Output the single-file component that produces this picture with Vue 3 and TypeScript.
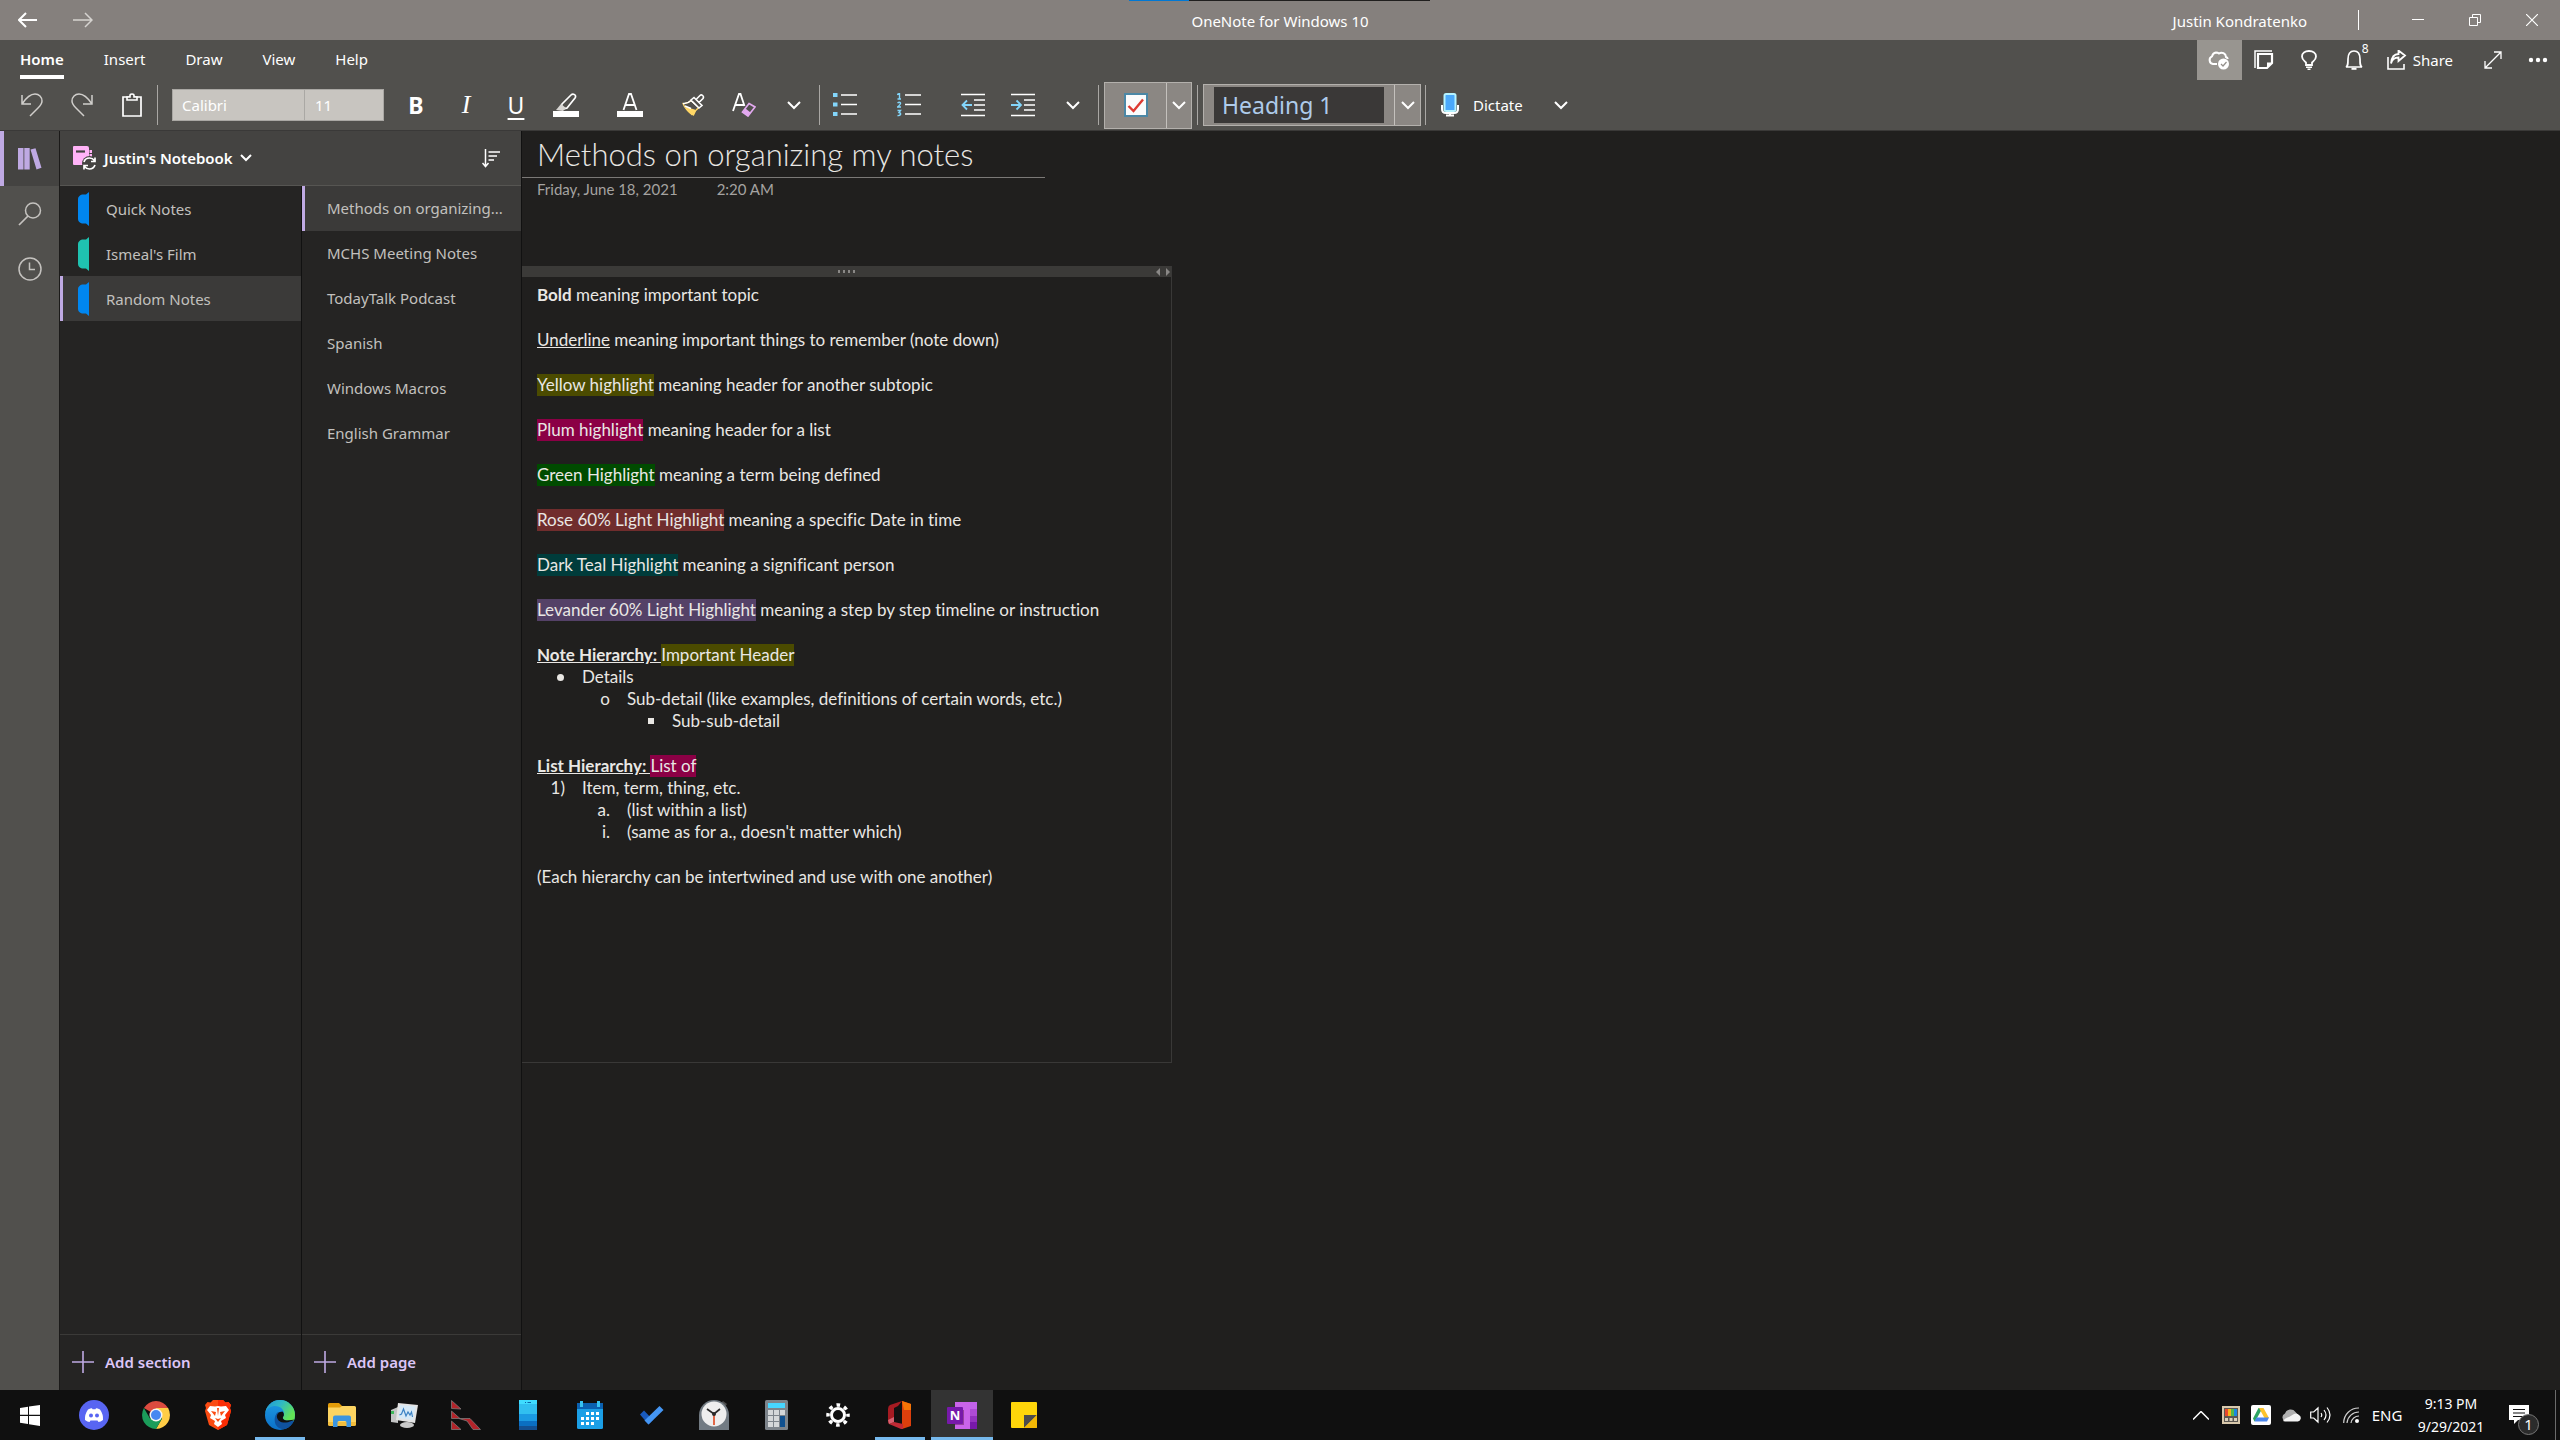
<script setup lang="ts">
import { ref } from 'vue'

interface Section { name: string; color: string }
interface Highlight { label: string; tone: string; rest: string }

const tabs = ['Home', 'Insert', 'Draw', 'View', 'Help']
const activeTab = ref('Home')

const sections: Section[] = [
  { name: 'Quick Notes', color: '#0086f0' },
  { name: "Ismeal's Film", color: '#1fc2b0' },
  { name: 'Random Notes', color: '#0086f0' },
]
const activeSection = ref('Random Notes')

const pages = [
  'Methods on organizing my notes',
  'MCHS Meeting Notes',
  'TodayTalk Podcast',
  'Spanish',
  'Windows Macros',
  'English Grammar',
]
const activePage = ref(pages[0])
const shortTitle = (title: string) => (title.length > 22 ? title.slice(0, 21) + '...' : title)

const highlights: Highlight[] = [
  { label: 'Yellow highlight', tone: 'yellow', rest: 'meaning header for another subtopic' },
  { label: 'Plum highlight', tone: 'plum', rest: 'meaning header for a list' },
  { label: 'Green Highlight', tone: 'green', rest: 'meaning a term being defined' },
  { label: 'Rose 60% Light Highlight', tone: 'rose', rest: 'meaning a specific Date in time' },
  { label: 'Dark Teal Highlight', tone: 'teal', rest: 'meaning a significant person' },
  { label: 'Levander 60% Light Highlight', tone: 'lavender', rest: 'meaning a step by step timeline or instruction' },
]
</script>

<template>
  <div class="desktop">
    <header class="titlebar">
      <div class="progress"><span class="progress-done"></span></div>
      <div class="nav">
        <button class="nav-btn" aria-label="Back"><svg width="20" height="16" viewBox="0 0 20 16"><path d="M8 1 1 8l7 7M1 8h18" fill="none" stroke="#fff" stroke-width="2" /></svg></button>
        <button class="nav-btn" aria-label="Forward"><svg width="20" height="16" viewBox="0 0 20 16"><path d="m12 1 7 7-7 7M19 8H0" fill="none" stroke="#d6d3d0" stroke-width="1.500" /></svg></button>
      </div>
      <div class="app-name">OneNote for Windows 10</div>
      <div class="account">
        <span class="user">Justin Kondratenko</span>
        <span class="account-line"></span>
        <button class="win-btn" aria-label="Minimize"><svg width="12" height="12"><path d="M0 5.500h12" stroke="#fff" /></svg></button>
        <button class="win-btn" aria-label="Restore"><svg width="12" height="12"><path d="M.5 3.500h8v8h-8zM3.500 3V.5h8v8H9" fill="none" stroke="#fff" /></svg></button>
        <button class="win-btn" aria-label="Close"><svg width="12" height="12"><path d="m0 0 12 12M12 0 0 12" stroke="#fff" stroke-width="1.200" /></svg></button>
      </div>
    </header>

    <div class="ribbon">
      <div class="menu">
        <nav class="tabs">
          <button v-for="t in tabs" :key="t" class="tab" :class="{ on: t === activeTab }" @click="activeTab = t">
            <span>{{ t }}</span>
          </button>
        </nav>
        <div class="tools">
          <button class="tool lit" aria-label="Sync status">
            <svg width="22" height="20" viewBox="0 0 22 20"><path d="M9 14H5a4 4 0 0 1-1-7.600A5 5 0 0 1 8 2.500c1 0 2 .2 3 1a4.500 4.500 0 0 1 7 3.500c1 .5 1.500 1 1.800 2" fill="none" stroke="#fff" stroke-width="2" /><circle cx="15.500" cy="14" r="5.500" fill="#fff" /><path d="m13 14 2 2 3.500-4" fill="none" stroke="#94908b" stroke-width="1.200" /></svg>
          </button>
          <button class="tool" aria-label="Feed">
            <svg width="20" height="20" viewBox="0 0 20 20"><path d="M1 18V1h17" fill="none" stroke="#fff" stroke-width="1.500" /><path d="M4 4h14v9l-5 5H4z" fill="none" stroke="#fff" stroke-width="2.200" /><path d="M18 12.500h-5V18z" fill="#fff" /></svg>
          </button>
          <button class="tool" aria-label="Ideas">
            <svg width="16" height="20" viewBox="0 0 16 20"><path d="M5 15v-2.500C3 10.500 1 9.500 1 6.500 1 3 4 1 8 1s7 2 7 5.500c0 3-2 4-4 6V15z" fill="none" stroke="#fff" stroke-width="1.800" /><path d="M5 17.200h6M6.500 19.200h3" stroke="#fff" stroke-width="1.600" /></svg>
          </button>
          <button class="tool" aria-label="Notifications">
            <svg width="18" height="20" viewBox="0 0 18 20"><path d="M1 17c2-1 2-3 2-8 0-5 2-8 6-8s6 3 6 8c0 5 0 7 2 8z" fill="none" stroke="#fff" stroke-width="1.700" /><path d="M6.500 18.800h5" stroke="#fff" stroke-width="2" /></svg>
            <span class="count">8</span>
          </button>
          <button class="share">
            <svg width="20" height="20" viewBox="0 0 20 20"><path d="M1 7v12h16v-5" fill="none" stroke="#fff" stroke-width="1.600" /><path d="M4 13.500C5 9 8 7.500 11.500 7.500V11l6.500-5.500L11.500.5V4C7 4 4.500 8 4 13.500z" fill="none" stroke="#fff" stroke-width="1.800" /></svg>
            Share
          </button>
          <button class="tool" aria-label="Full screen">
            <svg width="18" height="18" viewBox="0 0 18 18"><path d="M1 17 17 1M10 1h7v7M8 17H1v-7" fill="none" stroke="#fff" stroke-width="1.300" /></svg>
          </button>
          <button class="tool" aria-label="More">
            <svg width="20" height="6"><circle cx="3" cy="3" r="2.200" fill="#fff" /><circle cx="10" cy="3" r="2.200" fill="#fff" /><circle cx="17" cy="3" r="2.200" fill="#fff" /></svg>
          </button>
        </div>
      </div>

      <div class="toolbar">
        <div class="group first">
          <button class="tb" aria-label="Undo"><svg width="22" height="24" viewBox="0 0 22 24"><path d="M1 2v9h9M1 11C5 5 9 1 14 1c4 0 7 3 7 7 0 3-2 5-4 7l-8 8" fill="none" stroke="#d0cecb" stroke-width="1.500" /></svg></button>
          <button class="tb" aria-label="Redo"><svg width="22" height="24" viewBox="0 0 22 24"><path d="M21 2v9h-9M21 11C17 5 13 1 8 1 4 1 1 4 1 8c0 3 2 5 4 7l8 8" fill="none" stroke="#d0cecb" stroke-width="1.500" /></svg></button>
          <button class="tb" aria-label="Paste"><svg width="20" height="24" viewBox="0 0 20 24"><path d="M1 4h18v19H1z" fill="none" stroke="#fff" stroke-width="1.700" /><path d="M5 7V4h3V2.500Q8 1 10 1t2 1.500V4h3v3z" fill="#51504d" stroke="#fff" stroke-width="1.600" /></svg></button>
        </div>
        <div class="font-box">
          <select class="font-name" aria-label="Font"><option>Calibri</option></select>
          <select class="font-size" aria-label="Font size"><option>11</option></select>
        </div>
        <div class="group">
          <button class="tb glyph bold" aria-label="Bold">B</button>
          <button class="tb glyph italic" aria-label="Italic">I</button>
          <button class="tb glyph under" aria-label="Underline">U</button>
          <button class="tb" aria-label="Highlight"><svg width="26" height="24" viewBox="0 0 26 24"><path d="m9 11 9-9c2-2 6 0 4 3l-8 10-4 1-2-2z" fill="none" stroke="#fff" stroke-width="1.700" /><path d="M3 17 8 11l5 4-3 3z" fill="#d8d6d3" /><path d="M0 18h26v6H0z" fill="#fff" /></svg></button>
        </div>
        <div class="group inset">
          <button class="tb" aria-label="Font color"><svg width="26" height="24" viewBox="0 0 26 24"><path d="M6.500 17 12 1h2l5.500 16M8.500 12h9" fill="none" stroke="#fff" stroke-width="1.800" /><path d="M0 18h26v6H0z" fill="#fff" /></svg></button>
        </div>
        <div class="group">
          <button class="tb" aria-label="Format painter"><svg width="24" height="22" viewBox="0 0 24 22"><path d="M3 12.500 14 16l-2 4-2 1.500C7 19 4 16 3 12.500z" fill="#ffd766" /><path d="M1 9.500c4 .5 6-1 8-3l8 7c-3 2-4.500 4-5.500 7.500C7 18.500 3 15 1 9.500z" fill="none" stroke="#ffd766" stroke-width="1.200" /><path d="M1 9.500c4 .5 6-1 8-3l8 7M3 12l6 2.500" fill="none" stroke="#fff" stroke-width="1.400" /><path d="m9 6 3-2.500 8 8-3 2.500zM14 5.500l4-4c1.500-1.500 4.500.5 3 3l-4 4" fill="#51504d" stroke="#fff" stroke-width="1.600" /></svg></button>
          <button class="tb" aria-label="Clear formatting"><svg width="24" height="24" viewBox="0 0 24 24"><path d="M1 18 7 1h1.500l4 12M3 12h9" fill="none" stroke="#fff" stroke-width="1.800" /><path d="m17 10.500 6 3.500-7 9-5.500-4z" fill="#51504d" stroke="#e3a9f0" stroke-width="1.700" /><path d="m13.500 15.500 5 4-3 3.500-4.500-4z" fill="#e3a9f0" /></svg></button>
          <button class="tb" aria-label="More formatting"><svg class="chev" width="14" height="9"><path d="m1 1 6 6 6-6" /></svg></button>
        </div>
        <span class="sep"></span>
        <div class="group">
          <button class="tb" aria-label="Bullets"><svg width="24" height="24" viewBox="0 0 24 24"><path d="M0 0h4.500v4H0zM0 9.500h4.500v4H0zM0 19h4.500v4H0z" fill="#83d6fb" /><path d="M8 2h16M8 11.500h16M8 21h16" stroke="#fff" stroke-width="1.600" /></svg></button>
        </div>
        <div class="group inset">
          <button class="tb" aria-label="Numbering"><svg width="24" height="24" viewBox="0 0 24 24"><path d="M0 1.500 2.500.5V6M.5 6H4M.5 10q2-1.500 3 0 .5 1-3 4H4M.5 17.500h3L2 19.500q2 .5 1.500 2-1 1.500-3 1" fill="none" stroke="#83d6fb" stroke-width="1.400" /><path d="M8 2h16M8 11.500h16M8 21h16" stroke="#fff" stroke-width="1.600" /></svg></button>
        </div>
        <div class="group">
          <button class="tb" aria-label="Decrease indent"><svg width="24" height="24" viewBox="0 0 24 24"><path d="M0 1.500h24M13 7h11M13 12h11M13 17h11M0 22.500h24" stroke="#fff" stroke-width="1.700" /><path d="M11 12H1.500M6 7.500 1.500 12 6 16.500" fill="none" stroke="#83d6fb" stroke-width="1.800" /></svg></button>
          <button class="tb" aria-label="Increase indent"><svg width="24" height="24" viewBox="0 0 24 24"><path d="M0 1.500h24M13 7h11M13 12h11M13 17h11M0 22.500h24" stroke="#fff" stroke-width="1.700" /><path d="M0 12h10M5.500 7.500 10 12l-4.500 4.500" fill="none" stroke="#83d6fb" stroke-width="1.800" /></svg></button>
          <button class="tb" aria-label="More paragraph options"><svg class="chev" width="14" height="9"><path d="m1 1 6 6 6-6" /></svg></button>
        </div>
        <span class="sep"></span>
        <div class="tag-box">
          <button class="tag-main" aria-label="To-do tag"><svg width="24" height="24" viewBox="0 0 24 24"><path d="M1 1h22v22H1z" fill="#fbfbfb" stroke="#4b87a5" stroke-width="2" /><path d="m4.500 13 5 5L19 6.500" fill="none" stroke="#dd3a32" stroke-width="2.400" /></svg></button>
          <button class="tag-drop" aria-label="More tags"><svg class="chev" width="14" height="9"><path d="m1 1 6 6 6-6" /></svg></button>
        </div>
        <span class="sep"></span>
        <div class="style-box">
          <select class="style-name" aria-label="Style"><option>Heading 1</option></select>
          <button class="style-drop" aria-label="More styles"><svg class="chev" width="14" height="9"><path d="m1 1 6 6 6-6" /></svg></button>
        </div>
        <span class="sep"></span>
        <button class="dictate">
          <svg width="18" height="24" viewBox="0 0 18 24"><path d="M1 12v4q0 4 4 4h8q4 0 4-4v-4M9 20v3M5 22.500h8" fill="none" stroke="#fff" stroke-width="2" /><rect x="3.500" y="1" width="11" height="17" rx="1.500" fill="#4aa9fb" stroke="#b5f3ff" stroke-width="2" /></svg>
          Dictate
        </button>
        <button class="tb" aria-label="Dictate options"><svg class="chev" width="14" height="9"><path d="m1 1 6 6 6-6" /></svg></button>
      </div>
    </div>

    <div class="workspace">
      <nav class="rail">
        <button class="rail-btn on" aria-label="Notebooks"><svg width="24" height="22" viewBox="0 0 24 22"><path d="M0 0h5.500v21.500H0zM6.300 0h5.400v21.500H6.300zM12.500 1.500 17.500.3l6 19.500-5 1.700z" fill="#bfa9e3" /></svg></button>
        <button class="rail-btn" aria-label="Search"><svg width="24" height="24" viewBox="0 0 24 24"><circle cx="15" cy="8.500" r="7.500" fill="none" stroke="#c4c2bf" stroke-width="1.500" /><path d="m10 14-9 9" stroke="#c4c2bf" stroke-width="1.700" /></svg></button>
        <button class="rail-btn" aria-label="Recent notes"><svg width="24" height="24" viewBox="0 0 24 24"><circle cx="12" cy="12" r="11" fill="none" stroke="#c4c2bf" stroke-width="1.500" /><path d="M11.500 5.500v7H17" fill="none" stroke="#c4c2bf" stroke-width="1.500" /></svg></button>
      </nav>

      <div class="browser">
        <div class="book-bar">
          <button class="book">
            <svg width="24" height="24" viewBox="0 0 24 24"><path d="M0 1Q0 0 1 0h13q2 0 2 2v17H1q-1 0-1-1zM16.500 4H19v3h-2.500zM16.500 8H19v3h-2.500z" fill="#ffb3f7" /><path d="M3 5.500h9" stroke="#444341" stroke-width="2.200" /><circle cx="16.500" cy="17.500" r="7.500" fill="#444341" /><path d="M11 16q1-4 5.500-4 3 0 5 2.500M22 11.500v4h-4M22 19q-1.500 4-5.500 4-3 0-5-2.500M11 23.500v-4h4" fill="none" stroke="#fff" stroke-width="1.700" /></svg>
            <span>Justin's Notebook</span>
            <svg class="chev" width="12" height="9"><path d="m1 1 5 5 5-5" /></svg>
          </button>
          <button class="sort" aria-label="Sort"><svg width="18" height="19" viewBox="0 0 18 19"><path d="M3.500 0v17M.5 14l3 3.500 3-3.500M6.500 3H18M6.500 7H15M6.500 11H12" fill="none" stroke="#fff" stroke-width="1.500" /></svg></button>
        </div>
        <div class="columns">
          <div class="col sections">
            <div class="list">
              <button v-for="s in sections" :key="s.name" class="row section" :class="{ on: s.name === activeSection }" @click="activeSection = s.name">
                <svg width="11" height="34" viewBox="0 0 11 34"><path d="M11 0v34l-3-2.500H4Q0 30 0 27V7q0-3 4-4.500h4z" :fill="s.color" /></svg>
                <span>{{ s.name }}</span>
              </button>
            </div>
            <button class="add"><svg width="22" height="22"><path d="M11 0v22M0 11h22" stroke="#bfa9e3" stroke-width="1.600" /></svg>Add section</button>
          </div>
          <div class="col pages">
            <div class="list">
              <button v-for="p in pages" :key="p" class="row page" :class="{ on: p === activePage }" :title="p" @click="activePage = p">{{ shortTitle(p) }}</button>
            </div>
            <button class="add"><svg width="22" height="22"><path d="M11 0v22M0 11h22" stroke="#bfa9e3" stroke-width="1.600" /></svg>Add page</button>
          </div>
        </div>
      </div>

      <main class="canvas">
        <h1>Methods on organizing my notes</h1>
        <div class="stamp"><span>Friday, June 18, 2021</span><span>2:20 AM</span></div>
        <article class="note">
          <div class="grip">
            <svg width="18" height="3"><path d="M0 0h2v3H0zM5 0h2v3H5zM10 0h2v3h-2zM15 0h2v3h-2z" fill="#8a8886" /></svg>
            <svg class="arrows" width="15" height="8"><path d="M4 0v8L0 4zM10 0v8l4-4z" fill="#8a8886" /></svg>
          </div>
          <div class="text">
            <p><b>Bold</b> meaning important topic</p>
            <p><u>Underline</u> meaning important things to remember (note down)</p>
            <p v-for="h in highlights" :key="h.label"><mark :class="h.tone">{{ h.label }}</mark> {{ h.rest }}</p>
            <section>
              <div><b><u>Note Hierarchy: </u></b><mark class="yellow">Important Header</mark></div>
              <ul>
                <li><span class="marker"><i class="disc"></i></span>Details</li>
                <li class="l2"><span class="marker">o</span>Sub-detail (like examples, definitions of certain words, etc.)</li>
                <li class="l3"><span class="marker"><i class="block"></i></span>Sub-sub-detail</li>
              </ul>
            </section>
            <section>
              <div><b><u>List Hierarchy: </u></b><mark class="plum">List of</mark></div>
              <ul>
                <li><span class="marker">1)</span>Item, term, thing, etc.</li>
                <li class="l2"><span class="marker">a.</span>(list within a list)</li>
                <li class="l2"><span class="marker">i.</span>(same as for a., doesn't matter which)</li>
              </ul>
            </section>
            <p>(Each hierarchy can be intertwined and use with one another)</p>
          </div>
        </article>
      </main>
    </div>

    <footer class="taskbar">
      <button class="start" aria-label="Start"><svg width="20" height="21" viewBox="0 0 20 21"><path d="M0 3 8 1.800V9.800H0zM9 1.600 20 0v9.800H9zM0 11h8v8L0 17.800zM9 11h11v10L9 19.200z" fill="#fff" /></svg></button>
      <div class="apps">
        <button class="app" aria-label="Discord"><svg width="30" height="30" viewBox="0 0 30 30"><circle cx="15" cy="15" r="15" fill="#5865f2" /><path d="M9 9.500q3-1.500 4-1.300l.5 1h3l.5-1q1-.2 4 1.300 3.500 5 3 10.500-2.500 2-4.500 2l-1-1.600h-7L10.500 22q-2 0-4.500-2Q5.500 14.500 9 9.500z" fill="#fff" /><circle cx="12" cy="15.500" r="2" fill="#5865f2" /><circle cx="18" cy="15.500" r="2" fill="#5865f2" /></svg></button>
        <button class="app" aria-label="Chrome"><svg width="28" height="28" viewBox="0 0 28 28"><path d="M14 14 1.900 7A14 14 0 0 1 26.100 7z" fill="#db4b3f" /><path d="M14 7h12.100A14 14 0 0 1 14 28l6-10.500z" fill="#ffcd46" /><path d="M1.900 7A14 14 0 0 0 14 28l6-10.500L14 14 8 17.500z" fill="#1b9c5a" /><path d="M14 7.500h12.300L20 14z" fill="#ffcd46" /><circle cx="14" cy="14" r="6.500" fill="#f5f5f5" /><circle cx="14" cy="14" r="5" fill="#4688f1" /></svg></button>
        <button class="app" aria-label="Brave"><svg width="26" height="30" viewBox="0 0 26 30"><path d="M8 0h10l2.500 2.500 3-.5L26 5l-1 3 1 3-4 14-9 5-9-5L0 11l1-3-1-3 2.500-3 3 .5z" fill="#fb4b12" /><path d="M13 0h5l2.500 2.500 3-.5L26 5l-1 3 1 3-4 14-9 5z" fill="#fb2d05" /><path d="m5 6 5 .5L13 6l3 .5L21 6l3 4-4 5 1 3-5 3 1 3-4 3-4-3 1-3-5-3 1-3-4-5z" fill="#fff" /><path d="m6 11 5 1-1 4zM20 11l-5 1 1 4zM10 18l3 1 3-1-3 4zM12 8h2l-1 8z" fill="#fb4b12" /></svg></button>
        <button class="app open" aria-label="Edge"><svg width="30" height="30" viewBox="0 0 30 30"><defs><linearGradient id="wave" x1="0" x2="1" y1="0" y2=".5"><stop offset="0" stop-color="#1f93d8" /><stop offset=".5" stop-color="#2fb9c6" /><stop offset="1" stop-color="#62e355" /></linearGradient><linearGradient id="sea" y1="0" y2="1" x2="0"><stop offset="0" stop-color="#1e9ce4" /><stop offset="1" stop-color="#0b70c9" /></linearGradient><clipPath id="disc"><circle cx="15" cy="15" r="15" /></clipPath></defs><g clip-path="url(#disc)"><path d="M0 0h30v30H0z" fill="url(#sea)" /><path d="M13 12c-5 4-5 15 4 17l13 2V21z" fill="#0f529f" /><path d="M0 13C2 8 6 6 10 6c6 0 9 4 9 8 0 1.500-.5 2-1 3-.8 2 1.500 3.500 4.500 3.500H30V0H0z" fill="url(#wave)" /><path d="M17.500 11.500c-4 0-6 3-5.500 6 1 4 5 5.500 9 5 3-.3 5-1.500 7-2l2-1-7.500 1c-3 0-5.300-1.500-4.500-3.500 1.500-2 1-4-.5-5.500z" fill="#101010" /></g></svg></button>
        <button class="app" aria-label="File Explorer"><svg width="28" height="24" viewBox="0 0 28 24"><path d="M0 1.500Q0 0 1.500 0H11l3 3v4H0z" fill="#e39c09" /><path d="M0 4.500h12L14 3h12.500Q28 3 28 4.500V22H0z" fill="#fcd462" /><path d="M0 19h28v2.500q0 1.500-1.500 1.500h-25Q0 23 0 21.500z" fill="#f2bd3c" /><path d="M5 24V14.500q0-2 2-2h14q2 0 2 2V24h-4.500v-4.500q0-1.500-1.500-1.500h-6q-1.500 0-1.500 1.500V24z" fill="#3c95e0" /></svg></button>
        <button class="app" aria-label="Resource Monitor"><svg width="28" height="25" viewBox="0 0 28 25"><path d="M1 7 8 4v16l-7-1z" fill="#c3c4c4" /><path d="M1 8h3v3H1z" fill="#3fb85a" /><ellipse cx="17" cy="22" rx="7" ry="3" fill="#c9c9c9" /><path d="m8 0 20 2-3 18-19-3z" fill="#e4e4e4" /><path d="m10 2 15.500 1.500L23 17 8.500 15z" fill="#d6e9f7" /><path d="m9.500 12 2-1 2-5 2.500 7 2-4 2 3 1.500-3 1 5" fill="none" stroke="#3c82c4" stroke-width="1.200" /></svg></button>
        <button class="app" aria-label="Red arrows"><svg width="30" height="30" viewBox="0 0 30 30"><path d="M.5.5 10 9 .5 8.500zM.5 11 9 18.500H.5zM.5 21 10 29.500H.5zM8 18.500h11L29.500 29.500H22L16 21z" fill="#b3242a" stroke="#7d7777" stroke-width=".8" /></svg></button>
        <button class="app" aria-label="Your Phone"><svg width="18" height="30" viewBox="0 0 18 30"><rect width="18" height="30" rx="1" fill="#31bff0" /><path d="M0 14h18v7H0z" fill="#1b9ae2" /><path d="M0 21h18v5H0z" fill="#0b6fc2" /><path d="M0 26h18v4H0z" fill="#134f91" /><path d="M0 0h18v4H0z" fill="#3fdcff" /><path d="M6 2.500h1M8.500 2.500H12" stroke="#0c62a8" /></svg></button>
        <button class="app" aria-label="Calendar"><svg width="26" height="28" viewBox="0 0 26 28"><rect y="2" width="26" height="26" rx="1.500" fill="#1b9fe6" /><path d="M0 2h26v6H0z" fill="#0a61b1" /><path d="M3 0h3v6H3zM20 0h3v6h-3z" fill="#37c2f1" /><path d="M9 11h3v3H9zM14 11h3v3h-3zM19 11h3v3h-3zM4 16h3v3H4zM9 16h3v3H9zM14 16h3v3h-3zM19 16h3v3h-3zM4 21h3v3H4zM9 21h3v3H9zM14 21h3v3h-3z" fill="#fff" /></svg></button>
        <button class="app" aria-label="To Do"><svg width="24" height="20" viewBox="0 0 24 20"><path d="m0 9.500 4-4L13 15l-4.500 4.500z" fill="#195abd" /><path d="m8.500 19.500-4-4L19.500 1 23.500 5z" fill="#4596f3" /></svg></button>
        <button class="app" aria-label="Alarms"><svg width="30" height="30" viewBox="0 0 30 30"><path d="m24 1 4 3-2 3-4-4z" fill="#4b4b4b" /><path d="M0 15a15 15 0 0 1 30 0v15H0z" fill="#727b83" /><circle cx="15" cy="14" r="12.500" fill="#eee" /><path d="m8 9 7 5 6-5" fill="none" stroke="#2b2b2b" stroke-width="1.700" /><path d="M15 14v11" stroke="#e0502a" stroke-width="1.700" /><circle cx="15" cy="14" r="2" fill="#2b2b2b" /></svg></button>
        <button class="app" aria-label="Calculator"><svg width="23" height="30" viewBox="0 0 23 30"><rect width="23" height="30" rx="1.500" fill="#7d848b" /><path d="M3 3h17v5H3z" fill="#47d6ff" /><path d="M3 10h5v5H3zM9 10h5v5H9zM15 10h5v5h-5zM3 16h5v5H3zM9 16h5v5H9zM3 22h5v5H3zM9 22h5v5H9z" fill="#d4d7d9" /><path d="M15 16h5v11h-5z" fill="#0f508f" /></svg></button>
        <button class="app" aria-label="Settings"><svg width="24" height="24" viewBox="0 0 24 24"><circle cx="12" cy="12" r="6.500" fill="none" stroke="#fff" stroke-width="3" /><circle cx="12" cy="12" r="10" fill="none" stroke="#fff" stroke-width="3.500" stroke-dasharray="3.600 4.254" stroke-dashoffset="1.800" /></svg></button>
        <button class="app open" aria-label="Office"><svg width="24" height="28" viewBox="0 0 24 28"><path d="m14 0 9 3v22l-9 3z" fill="#dc3f0c" /><path d="m14 0 9 3v6h-7z" fill="#f57406" /><path d="m14 0-4 5-4 2v14l-5 2q-1-1-1-3V8q0-3 2-4z" fill="#a51b22" /><path d="m1 23 5-2 9 2v5h-2z" fill="#c02a35" /><path d="M1 23 0 19l6-3v5z" fill="#d6606f" /></svg></button>
        <button class="app active" aria-label="OneNote"><svg width="30" height="27" viewBox="0 0 30 27"><path d="M8 0h15v27H8z" fill="#ca64ea" /><path d="M23 0h7v7h-7z" fill="#c262ea" /><path d="M23 7h7v7h-7z" fill="#ae4bd5" /><path d="M23 14h7v6h-7z" fill="#9332bf" /><path d="M23 20h7v7h-7z" fill="#7719aa" /><path d="M8 8h9v15H8z" fill="#96409f" /><rect y="5" width="16" height="17" rx="1" fill="#7719aa" /><text x="8" y="18" text-anchor="middle" font-family="Open Sans, sans-serif" font-weight="700" font-size="13" fill="#fff">N</text></svg></button>
        <button class="app" aria-label="Sticky Notes"><svg width="26" height="26" viewBox="0 0 26 26"><rect width="26" height="26" rx="1" fill="#ffd60a" /><path d="M13 26V13h13z" fill="#4c4c4c" /><path d="m13 26 13-13v12q0 1-1 1z" fill="#f2b705" /></svg></button>
      </div>
      <div class="tray">
        <button class="ti" aria-label="Show hidden icons"><svg width="16" height="9"><path d="m0 8.500 8-8 8 8" fill="none" stroke="#fff" stroke-width="1.500" /></svg></button>
        <button class="ti" aria-label="PowerToys"><svg width="18" height="18"><path d="M0 0h18v18H0z" fill="#d9c9ac" /><path d="M2 2h14v14H2z" fill="#5c5751" /><path d="M3 3h3v7H3z" fill="#e6482e" /><path d="M6 3h3v7H6z" fill="#f8b21a" /><path d="M9 3h3v7H9z" fill="#54b948" /><path d="M12 3h3v7h-3z" fill="#1b87e0" /><path d="M3 12h3v3H3zM7.500 12h3v3h-3zM12 12h3v3h-3z" fill="#dcd2bd" /></svg></button>
        <button class="ti" aria-label="Google Drive"><svg width="20" height="20"><rect width="20" height="20" rx="2" fill="#fff" /><path d="M7.500 3h4L5.500 14l-2 2.500L2 13.500z" fill="#2da562" /><path d="M8 3h4.500L18 13h-4.500z" fill="#fcc32c" /><path d="M5.500 12.500H18L16 16.500H3.500z" fill="#4a86ec" /></svg></button>
        <button class="ti" aria-label="OneDrive"><svg width="20" height="14" viewBox="0 0 20 14"><path d="M4 13a4 4 0 0 1 0-7.500A6 6 0 0 1 14.500 4L17 7l-8 6z" fill="#b0b0b0" /><path d="M2 13q2-3 6-4l5-3q3-1.500 5 1a3.500 3.500 0 0 1-1 6.500H4z" fill="#f4f4f4" /></svg></button>
        <button class="ti" aria-label="Volume"><svg width="22" height="18" viewBox="0 0 22 18"><path d="M.7 6h3L8 2v14l-4.300-4h-3zM11 7q1.500 2 0 4M14 4q4 5 0 10M17 1.500q6 7.500 0 15" fill="none" stroke="#fff" stroke-width="1.200" /></svg></button>
        <button class="ti" aria-label="Network"><svg width="16" height="16" viewBox="0 0 16 16"><path d="M.7 16A15 15 0 0 1 16 1M4 16A12 12 0 0 1 16 5M8 16a8 8 0 0 1 8-7" fill="none" stroke="#d0d0d0" stroke-width="1.200" /><circle cx="14" cy="14" r="2" fill="#fff" /></svg></button>
        <button class="lang">ENG</button>
        <button class="clock"><span>9:13 PM</span><span>9/29/2021</span></button>
        <button class="action" aria-label="Action center">
          <svg width="20" height="20"><path d="M0 0h20v15H9l-4 4v-4H0z" fill="#fff" /><path d="M4 4.500h12M4 8h12M4 11.500h12" stroke="#101010" stroke-width="1.200" /></svg>
          <span class="badge">1</span>
        </button>
        <span class="peek"></span>
      </div>
    </footer>
  </div>
</template>

<style>
body { background: #201f1e; }
</style>

<style scoped>
* { box-sizing: border-box; }
.desktop { display: flex; flex-direction: column; min-height: 100vh; font: 15px/20px "Noto Sans", "Open Sans", sans-serif; color: #fff; background: #201f1e; }
button { border: 0; padding: 0; margin: 0; background: none; color: inherit; font: inherit; display: flex; align-items: center; justify-content: center; flex: none; }
select { appearance: none; border: 0; margin: 0; border-radius: 0; background: none; color: inherit; font: inherit; }
svg { display: block; flex: none; }
.chev { fill: none; stroke: #fff; stroke-width: 2; }

.titlebar { position: relative; display: grid; grid-template-columns: 1fr auto 1fr; align-items: center; height: 40px; background: #85807d; }
.progress { position: absolute; top: 0; left: 1129px; width: 301px; height: 1px; background: #201f1e; }
.progress-done { display: block; width: 60px; height: 1px; background: #0078d4; }
.nav { display: flex; }
.nav-btn { width: 55px; height: 40px; }
.app-name, .user { padding-top: 2px; }
.account { display: flex; align-items: center; justify-content: flex-end; }
.account-line { width: 1px; height: 20px; margin: 0 30px 0 51px; background: #fff; }
.win-btn { width: 57px; height: 40px; }

.ribbon { background: #51504d; border-bottom: 1px solid #3a3938; }
.menu { display: flex; justify-content: space-between; height: 40px; }
.tabs { display: flex; }
.tab { padding: 0 20px; height: 40px; }
.tab span { display: flex; align-items: center; height: 38px; border: solid transparent; border-width: 2px 0 4px; }
.tab.on span { font-weight: 600; border-bottom-color: #fff; }
.tools { display: flex; }
.tool { position: relative; width: 45px; height: 40px; }
.tool.lit { background: #989590; }
.count { position: absolute; top: 1px; left: 30px; font-size: 12px; line-height: 16px; }
.share { gap: 6px; padding: 0 17px 0 10px; }

.toolbar { display: flex; align-items: center; height: 50px; }
.group { display: flex; }
.group.first { padding-left: 7px; border-right: 1px solid #a9a7a4; }
.group.inset { margin: 0 14px; }
.tb { width: 50px; height: 40px; }
.font-box { display: flex; width: 212px; height: 32px; margin: 0 7px 0 14px; background: #c8c5c0; border: 1px solid #aaa8a4; }
.font-name { width: 132px; padding: 0 9px; border-right: 1px solid #aaa8a4; }
.font-size { width: 78px; padding: 0 10px; }
.glyph { font-size: 23px; line-height: 28px; }
.bold { font-weight: 700; }
.italic { font-family: "Liberation Serif", serif; font-style: italic; font-size: 26px; }
.under { text-decoration: underline; text-underline-offset: 4px; }
.sep { flex: none; width: 1px; height: 40px; background: #a9a7a4; }
.tag-box { display: flex; width: 88px; height: 47px; margin: 0 5px; background: #8b8783; border: 1px solid #b3b0ac; }
.tag-main { width: 62px; border-right: 1px solid #c4c1bd; }
.tag-drop { width: 24px; }
.style-box { display: flex; align-items: center; width: 218px; height: 42px; margin: 0 4px 0 5px; padding-left: 10px; background: #8b8783; border: 1px solid #b3b0ac; }
.style-name { width: 170px; height: 36px; padding: 0 8px; background: #3a3837; color: #aecbea; font-size: 23px; line-height: 34px; }
.style-drop { width: 26px; height: 40px; margin-left: 10px; border-left: 1px solid #c4c1bd; }
.dictate { gap: 14px; padding: 0 13px 0 15px; height: 40px; }

.workspace { display: flex; flex: 1; }
.rail { flex: none; width: 60px; background: #51504d; border-right: 1px solid #1b1a19; }
.rail-btn { width: 59px; height: 55px; }
.rail-btn.on { background: #444341; box-shadow: inset 4px 0 #bfa9e3; }
.browser { flex: none; width: 462px; display: flex; flex-direction: column; background: #252423; border-right: 1px solid #111; }
.book-bar { display: flex; justify-content: space-between; align-items: center; height: 55px; padding: 0 21px 0 13px; background: #444341; border-bottom: 1px solid #565552; }
.book { gap: 7px; font-weight: 600; }
.columns { display: flex; flex: 1; }
.col { display: flex; flex-direction: column; justify-content: space-between; color: #c2c0be; }
.sections { width: 242px; border-right: 1px solid #111; }
.pages { flex: 1; min-width: 0; }
.row { width: 100%; height: 45px; justify-content: flex-start; border-left: 3px solid transparent; white-space: nowrap; }
.row.on { background: #3b3a39; border-left-color: #bfa9e3; }
.section { gap: 17px; padding-left: 15px; }
.page { padding: 0 0 2px 22px; }
.add { width: 100%; height: 56px; gap: 11px; justify-content: flex-start; padding: 0 0 2px 12px; border-top: 1px solid #3b3a38; color: #dcc6f7; font-weight: 600; }

.canvas { flex: 1; min-width: 0; font-family: Lato, "Open Sans", sans-serif; font-variant-ligatures: none; color: #e9e7e4; }
h1 { width: 523px; height: 47px; margin: 0; padding-left: 15px; border-bottom: 1px solid #7b7977; font-size: 31px; line-height: 46px; font-weight: 300; }
.stamp { display: flex; gap: 39px; padding: 0 15px; height: 24px; line-height: 22px; color: #a5a3a1; }
.note { width: 650px; min-height: 797px; margin-top: 64px; border: solid #393837; border-width: 0 1px 1px 0; font-size: 17px; line-height: 22px; }
.grip { position: relative; display: flex; align-items: center; justify-content: center; height: 11px; background: #3b3a38; }
.arrows { position: absolute; right: 0; top: 2px; }
.text { padding: 7px 15px; white-space: nowrap; }
p { height: 22px; margin: 0 0 23px; }
section { margin-bottom: 23px; }
section > div { height: 22px; }
.text b { font-weight: 700; }
mark { display: inline-block; height: 22px; vertical-align: top; color: inherit; }
.yellow { background: #4b4b00; }
.plum { background: #8b0045; }
.green { background: #004b00; }
.rose { background: #702d2d; }
.teal { background: #003c3b; }
.lavender { background: #544167; }
ul { margin: 0; padding: 0; list-style: none; }
li { display: flex; }
.l2 { padding-left: 45px; }
.l3 { padding-left: 90px; }
.marker { display: flex; justify-content: flex-end; align-items: center; width: 28px; margin-right: 17px; }
.disc { width: 7px; height: 7px; margin-right: 1px; border-radius: 50%; background: #e9e7e4; }
.block { width: 6px; height: 6px; margin-right: 1px; background: #e9e7e4; }

.taskbar { display: flex; height: 50px; background: #101010; }
.start { width: 60px; margin-right: 3px; }
.apps { display: flex; flex: 1; }
.app { position: relative; width: 62px; height: 50px; }
.app.active { background: #333; }
.app.open::after, .app.active::after { content: ""; position: absolute; left: 6px; right: 6px; bottom: 0; height: 3px; background: #76b9ed; }
.app.active::after { left: 0; right: 0; }
.tray { display: flex; align-items: stretch; }
.ti { width: 30px; }
.lang { width: 37px; padding-left: 5px; }
.clock { width: 96px; flex-direction: column; line-height: 23px; font-size: 14px; }
.action { position: relative; width: 56px; padding-right: 16px; }
.badge { position: absolute; left: 19px; top: 24px; width: 21px; height: 21px; border: 1px solid #777; border-radius: 50%; background: #2b2b2b; line-height: 19px; text-align: center; }
.peek { width: 5px; border-left: 1px solid #6b6b6b; }
</style>
